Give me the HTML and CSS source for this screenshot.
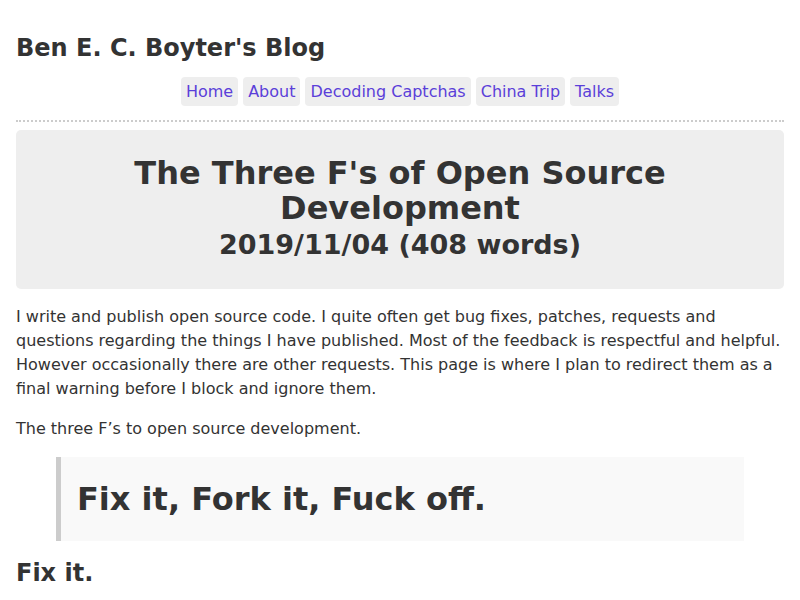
FILE: index.html
```html
<!DOCTYPE html>
<html lang="en">
<head>
<meta charset="utf-8">
<title>The Three F's of Open Source Development</title>
<link rel="stylesheet" href="styles.css">
</head>
<body>
<div class="page">
  <header class="site-header">
    <h1 class="site-title">Ben E. C. Boyter's Blog</h1>
    <nav class="nav">
      <a class="nav-item" href="#">Home</a>
      <a class="nav-item" href="#">About</a>
      <a class="nav-item" href="#">Decoding Captchas</a>
      <a class="nav-item" href="#">China Trip</a>
      <a class="nav-item" href="#">Talks</a>
    </nav>
  </header>
  <section class="post-head">
    <h1 class="post-title">The Three F's of Open Source Development</h1>
    <h2 class="post-meta">2019/11/04 (408 words)</h2>
  </section>
  <p class="text">I write and publish open source code. I quite often get bug fixes, patches, requests and questions regarding the things I have published. Most of the feedback is respectful and helpful. However occasionally there are other requests. This page is where I plan to redirect them as a final warning before I block and ignore them.</p>
  <p class="text">The three F’s to open source development.</p>
  <blockquote class="quote">
    <h1 class="quote-title">Fix it, Fork it, Fuck off.</h1>
  </blockquote>
  <h2 class="section-title">Fix it.</h2>
</div>
</body>
</html>
```
FILE: styles.css
```css
html, body {
  margin: 0;
  padding: 0;
  background: #fff;
}
body {
  font-family: "DejaVu Sans", sans-serif;
  color: #333;
  font-size: 16px;
  line-height: 24px;
}
.page {
  padding: 0 16px;
}
.site-header {
  padding-top: 32px;
  border-bottom: 2px dotted #ccc;
  padding-bottom: 14px;
}
.site-title {
  margin: 0 0 13px;
  font-size: 24px;
  line-height: 32px;
  font-weight: bold;
}
.nav {
  display: flex;
  justify-content: center;
  gap: 5px;
}
.nav-item {
  background: #eee;
  border-radius: 4px;
  padding: 3px 5px 2px;
  color: #5b3fd9;
  text-decoration: none;
  font-size: 16px;
  line-height: 24px;
}
.post-head {
  margin-top: 8px;
  background: #eee;
  border-radius: 5px;
  padding: 26px 16px 25px;
  text-align: center;
}
.post-title {
  margin: 0;
  font-size: 32px;
  line-height: 35px;
}
.post-meta {
  margin: 0;
  font-size: 27px;
  line-height: 38px;
}
.text {
  margin: 16px 0;
  font-size: 16px;
  line-height: 24px;
}
.quote {
  margin: 16px 40px;
  background: #f9f9f9;
  border-left: 5px solid #ccc;
  padding: 22px 16px;
}
.quote-title {
  margin: 0;
  font-size: 32px;
  line-height: 40px;
}
.section-title {
  margin: 13px 0;
  font-size: 24px;
  line-height: 32px;
}
```
